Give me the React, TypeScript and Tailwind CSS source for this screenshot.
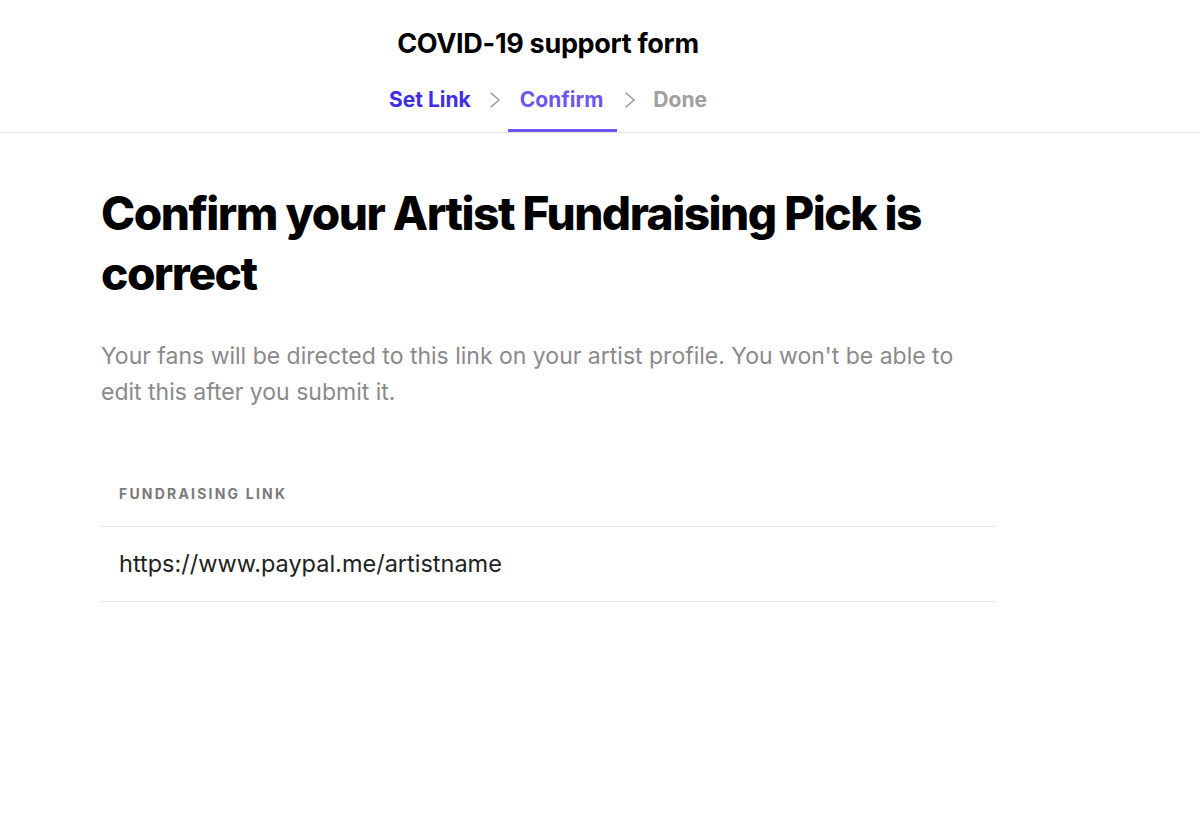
import React from 'react';

const Chevron: React.FC<{ className: string }> = ({ className }) => (
  <svg width="14" height="20" viewBox="0 0 14 20" fill="none" className={className}>
    <path d="M3 3l8 7-8 7" stroke="#9a9a9a" strokeWidth="1.6" strokeLinecap="round" strokeLinejoin="round" />
  </svg>
);

const App: React.FC = () => {
  return (
    <div className="min-h-screen bg-white text-black" style={{ fontFamily: 'Inter, "Liberation Sans", sans-serif' }}>
      <header className="border-b border-[#e6e6e6]">
        <div className="ml-[101px] w-[894px] flex flex-col items-center">
          <h1 className="mt-[28px] text-[27px] leading-[32px] font-bold tracking-[-0.3px]">COVID-19 support form</h1>
          <nav className="mt-[20px] flex items-start">
            <a className="pt-[8px] h-[52px] text-[21px] leading-[24px] font-bold text-[#3d2ee6]">Set Link</a>
            <div className="pt-[10px]">
              <Chevron className="ml-[17px] mr-[6px]" />
            </div>
            <a className="pt-[8px] h-[52px] pl-[12px] pr-[14px] text-[21px] leading-[24px] font-bold text-[#6c56f0] border-b-[3px] border-[#6c56f0]">
              Confirm
            </a>
            <div className="pt-[10px]">
              <Chevron className="ml-[6px] mr-[16px]" />
            </div>
            <a className="pt-[8px] h-[52px] text-[21px] leading-[24px] font-bold text-[#a0a0a0]">Done</a>
          </nav>
        </div>
      </header>

      <main className="ml-[101px] w-[894px]">
        <h2 className="mt-[50px] text-[46px] leading-[60px] font-extrabold tracking-[-1.5px]">
          Confirm your Artist Fundraising Pick is correct
        </h2>
        <p className="mt-[35px] text-[23px] leading-[36px] text-[#8a8a8a]">
          Your fans will be directed to this link on your artist profile. You won't be able to edit this after you
          submit it.
        </p>

        <section className="mt-[73px]">
          <div className="px-[18px] pb-[22px] text-[14px] font-bold tracking-[2.2px] text-[#7a7a7a] uppercase">
            Fundraising Link
          </div>
          <div className="border-t border-b border-[#e8e8e8] px-[18px] h-[76px] flex items-center text-[23.5px] text-[#222]">
            https://www.paypal.me/artistname
          </div>
        </section>
      </main>
    </div>
  );
};

export default App;
